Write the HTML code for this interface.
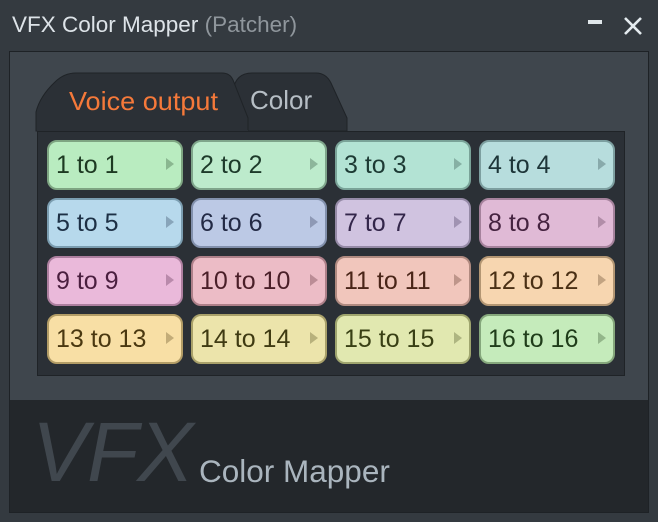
<!DOCTYPE html>
<html><head><style>
*{margin:0;padding:0;box-sizing:border-box}
body{width:658px;height:522px;background:#343a40;font-family:"Liberation Sans",sans-serif;position:relative;overflow:hidden}
.title{position:absolute;left:12px;top:12px;font-size:22.5px;color:#dde3e8}
.title span{color:#8f969c}
.min{position:absolute;left:588px;top:20px;width:14px;height:4px;background:#dfe6ea}
.x{position:absolute;left:622px;top:15px;width:22px;height:22px}
.panel{position:absolute;left:9px;top:51px;width:640px;height:462px;background:#3f464d;border:1px solid #1e2226}
.foot{position:absolute;left:0;top:348px;width:638px;height:112px;background:#23272b}
.vfx{position:absolute;left:22px;top:4px;font-size:84px;font-style:italic;color:#40474e;letter-spacing:-1px}
.cm{position:absolute;left:189px;top:53px;font-size:31.5px;color:#aab5be}
.grid{position:absolute;left:37px;top:130px;width:588px;height:245px;background:#2b3036;border:1px solid #1f2327}
.b{position:absolute;width:136px;height:50px;border-radius:10px;border:2px solid;font-size:25px;padding:9px 0 0 7px}
.b::after{content:"";position:absolute;right:7px;top:16px;border-left:8px solid currentColor;border-top:6px solid transparent;border-bottom:6px solid transparent;opacity:.3}
</style></head><body>
<div class="title">VFX Color Mapper <span>(Patcher)</span></div>
<div class="min"></div>
<svg class="x" viewBox="0 0 22 22"><path d="M3 3L19 19M19 3L3 19" stroke="#e4ebef" stroke-width="2.6"/></svg>
<div class="panel">
<div class="foot"><div class="vfx">VFX</div><div class="cm">Color Mapper</div></div>
</div>
<svg style="position:absolute;left:0;top:0" width="658" height="140">
<path d="M233 131 L233 90 Q236 73 252 73 L316 73 Q326 73 331 83 L347 118 L347 131Z" fill="#2b3036" stroke="#1f2327"/>
<path d="M36 131 L36 112 Q40 96 55 82 Q64 73 76 73 L222 73 Q230 73 233 80 L248 118 L248 131Z" fill="#2b3036" stroke="#1f2327"/>
<rect x="37" y="130" width="211" height="3" fill="#2b3036"/>
<text x="69" y="110" font-family="Liberation Sans" font-size="26" fill="#f5793a" textLength="149" lengthAdjust="spacingAndGlyphs">Voice output</text>
<text x="250" y="109" font-family="Liberation Sans" font-size="26" fill="#b6bec5">Color</text>
</svg>
<div class="grid" style="top:131px"></div>
<div class="b" style="left:47px;top:140px;background:#b9ecc0;border-color:#7ea582;color:#1d3a22">1 to 1</div>
<div class="b" style="left:191px;top:140px;background:#bdebcc;border-color:#7fa58b;color:#1d3a2a">2 to 2</div>
<div class="b" style="left:335px;top:140px;background:#b3e3d4;border-color:#7aa398;color:#1d3a34">3 to 3</div>
<div class="b" style="left:479px;top:140px;background:#b7dddd;border-color:#7d9fa0;color:#1d3538">4 to 4</div>
<div class="b" style="left:47px;top:198px;background:#b7d9ec;border-color:#7b9db0;color:#1d3045">5 to 5</div>
<div class="b" style="left:191px;top:198px;background:#bcc9e5;border-color:#8290ac;color:#232a45">6 to 6</div>
<div class="b" style="left:335px;top:198px;background:#d0c3e0;border-color:#958aa6;color:#33264a">7 to 7</div>
<div class="b" style="left:479px;top:198px;background:#e0bad6;border-color:#a5829c;color:#452340">8 to 8</div>
<div class="b" style="left:47px;top:256px;background:#eab9da;border-color:#ad7f9f;color:#4a1f3f">9 to 9</div>
<div class="b" style="left:191px;top:256px;background:#ecbcc6;border-color:#ae8089;color:#4a1f28">10 to 10</div>
<div class="b" style="left:335px;top:256px;background:#f1c6bc;border-color:#b08a80;color:#4a2518">11 to 11</div>
<div class="b" style="left:479px;top:256px;background:#f7d6b0;border-color:#b39673;color:#4a3015">12 to 12</div>
<div class="b" style="left:47px;top:314px;background:#f8dfa5;border-color:#b39d66;color:#4a3810">13 to 13</div>
<div class="b" style="left:191px;top:314px;background:#ece4ab;border-color:#a9a16a;color:#3f3a12">14 to 14</div>
<div class="b" style="left:335px;top:314px;background:#e1e8b0;border-color:#9fa56e;color:#383f14">15 to 15</div>
<div class="b" style="left:479px;top:314px;background:#c5ebbb;border-color:#85a77c;color:#203d1a">16 to 16</div>
</body></html>
